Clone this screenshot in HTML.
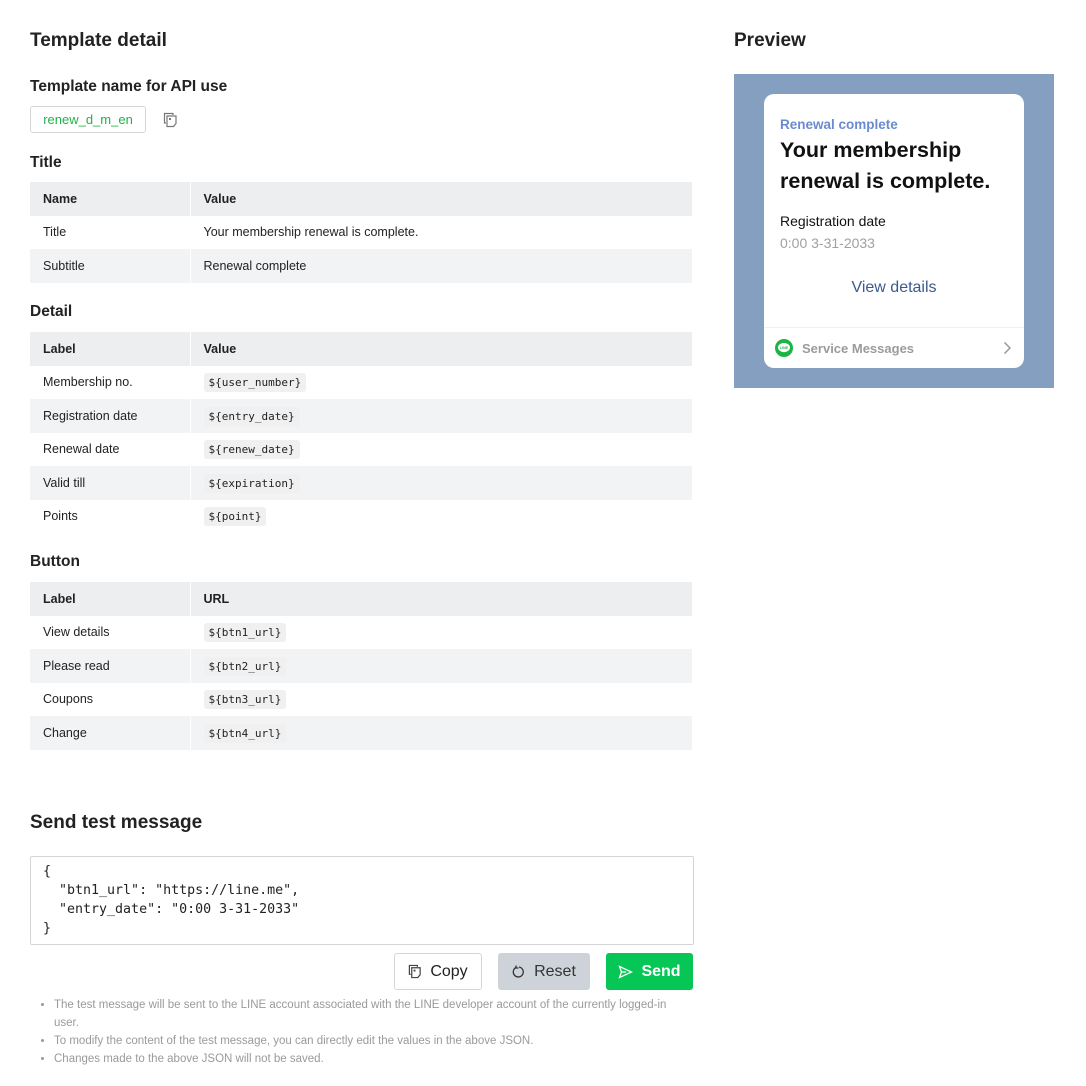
<!DOCTYPE html>
<html><head><meta charset="utf-8">
<style>
*{margin:0;padding:0;box-sizing:border-box}
body{width:1086px;height:1086px;background:#fff;font-family:"Liberation Sans",Arial,sans-serif;color:#111;position:relative;overflow:hidden}
.a{position:absolute}
h1{position:absolute;font-size:19px;font-weight:bold;color:#222}
h2{position:absolute;font-size:15.5px;font-weight:bold;color:#222}
table{position:absolute;left:30px;width:663px;border-collapse:collapse;font-size:12.5px;color:#222}
td{height:33.5px;padding:0 13px;border-right:1px solid #fff}
td:first-child{width:160px}
tr.h td{font-weight:bold;background:#eceef0}
tr.g td{background:#f2f3f4}
code{font-family:"DejaVu Sans Mono","Liberation Mono",monospace;font-size:11px;background:#f0f0f1;padding:3px 5px;border-radius:3px;color:#222}
.btn{position:absolute;top:953px;height:37px;border-radius:3px;font-size:16px;display:flex;align-items:center;justify-content:center;gap:8px}
</style></head><body>
<h1 style="left:30px;top:30px">Template detail</h1>
<h2 style="left:30px;top:78px">Template name for API use</h2>
<div class="a" style="left:30px;top:106px;width:116px;height:27px;border:1px solid #d6d6d6;border-radius:3px;color:#1db446;font-size:13px;display:flex;align-items:center;justify-content:center">renew_d_m_en</div>
<svg class="a" style="left:163px;top:112px" width="15" height="16" viewBox="0 0 15 16" fill="none" stroke="#777" stroke-width="1.2"><path d="M3 11H1.5V1.5H10V3"/><path d="M4 4h9v7.5L10.5 14.5H4z"/><rect x="6" y="6" width="2" height="2" fill="#777" stroke="none"/></svg>
<h2 style="left:30px;top:154px">Title</h2>
<table style="top:182px">
<tr class="h"><td>Name</td><td>Value</td></tr>
<tr><td>Title</td><td>Your membership renewal is complete.</td></tr>
<tr class="g"><td>Subtitle</td><td>Renewal complete</td></tr>
</table>
<h2 style="left:30px;top:303px">Detail</h2>
<table style="top:332px">
<tr class="h"><td>Label</td><td>Value</td></tr>
<tr><td>Membership no.</td><td><code>${user_number}</code></td></tr>
<tr class="g"><td>Registration date</td><td><code>${entry_date}</code></td></tr>
<tr><td>Renewal date</td><td><code>${renew_date}</code></td></tr>
<tr class="g"><td>Valid till</td><td><code>${expiration}</code></td></tr>
<tr><td>Points</td><td><code>${point}</code></td></tr>
</table>
<h2 style="left:30px;top:553px">Button</h2>
<table style="top:582px">
<tr class="h"><td>Label</td><td>URL</td></tr>
<tr><td>View details</td><td><code>${btn1_url}</code></td></tr>
<tr class="g"><td>Please read</td><td><code>${btn2_url}</code></td></tr>
<tr><td>Coupons</td><td><code>${btn3_url}</code></td></tr>
<tr class="g"><td>Change</td><td><code>${btn4_url}</code></td></tr>
</table>
<h1 style="left:30px;top:812px">Send test message</h1>
<div class="a" style="left:30px;top:856px;width:664px;height:89px;border:1px solid #d4d4d4;border-radius:2px;padding:5px 12px;font-family:'DejaVu Sans Mono','Liberation Mono',monospace;font-size:13.3px;line-height:19px;color:#222;white-space:pre">{
  "btn1_url": "https://line.me",
  "entry_date": "0:00 3-31-2033"
}</div>
<div class="btn" style="left:394px;width:88px;border:1px solid #d6d6d6;color:#222"><svg width="14" height="15" viewBox="0 0 15 16" fill="none" stroke="#444" stroke-width="1.3"><path d="M3 11H1.5V1.5H10V3"/><path d="M4 4h9v7.5L10.5 14.5H4z"/><rect x="6" y="6" width="2" height="2" fill="#444" stroke="none"/></svg>Copy</div>
<div class="btn" style="left:498px;width:92px;background:#ced3da;color:#333"><svg width="14" height="14" viewBox="0 0 14 14" fill="none" stroke="#333" stroke-width="1.3"><path d="M4 2.5A5 5 0 1 0 7 2"/><path d="M4 0.5v2.5h2.5"/></svg>Reset</div>
<div class="btn" style="left:606px;width:87px;background:#06c755;color:#fff;font-weight:bold"><svg width="15" height="14" viewBox="0 0 15 14" fill="none" stroke="#fff" stroke-width="1.3"><path d="M1.5 1.5L13.5 7L1.5 12.5L3.5 7z"/><path d="M3.5 7H8"/></svg>Send</div>
<ul class="a" style="left:54px;top:996px;width:630px;font-size:11.5px;line-height:18px;color:#9a9a9a;list-style:disc">
<li>The test message will be sent to the LINE account associated with the LINE developer account of the currently logged-in user.</li>
<li>To modify the content of the test message, you can directly edit the values in the above JSON.</li>
<li>Changes made to the above JSON will not be saved.</li>
</ul>
<h1 style="left:734px;top:30px">Preview</h1>
<div class="a" style="left:734px;top:74px;width:320px;height:314px;background:#849fc0"></div>
<div class="a" style="left:764px;top:94px;width:260px;height:274px;background:#fff;border-radius:10px"></div>
<div class="a" style="left:780px;top:117px;font-size:13.5px;font-weight:bold;color:#6b8bd0">Renewal complete</div>
<div class="a" style="left:780px;top:135px;font-size:21.5px;font-weight:bold;line-height:31px;color:#111;width:240px">Your membership renewal is complete.</div>
<div class="a" style="left:780px;top:213px;font-size:14px;color:#111">Registration date</div>
<div class="a" style="left:780px;top:235px;font-size:14px;color:#a0a0a0">0:00 3-31-2033</div>
<div class="a" style="left:764px;top:279px;width:260px;text-align:center;font-size:16px;color:#3a5a8c">View details</div>
<div class="a" style="left:764px;top:327px;width:260px;border-top:1px solid #f2f2f2"></div>
<svg class="a" style="left:774px;top:338px" width="20" height="20" viewBox="0 0 20 20"><circle cx="10" cy="10" r="9" fill="#1db446"/><ellipse cx="10" cy="9.5" rx="6" ry="4.6" fill="#fff"/><text x="10" y="11" font-size="3.5" font-family="Liberation Sans" font-weight="bold" fill="#1db446" text-anchor="middle">LINE</text></svg>
<div class="a" style="left:802px;top:341px;font-size:13px;font-weight:bold;color:#9b9b9b">Service Messages</div>
<svg class="a" style="left:1002px;top:341px" width="10" height="14" viewBox="0 0 10 14" fill="none" stroke="#999" stroke-width="1.5"><path d="M2.5 1.5L8 7L2.5 12.5"/></svg>
</body></html>
